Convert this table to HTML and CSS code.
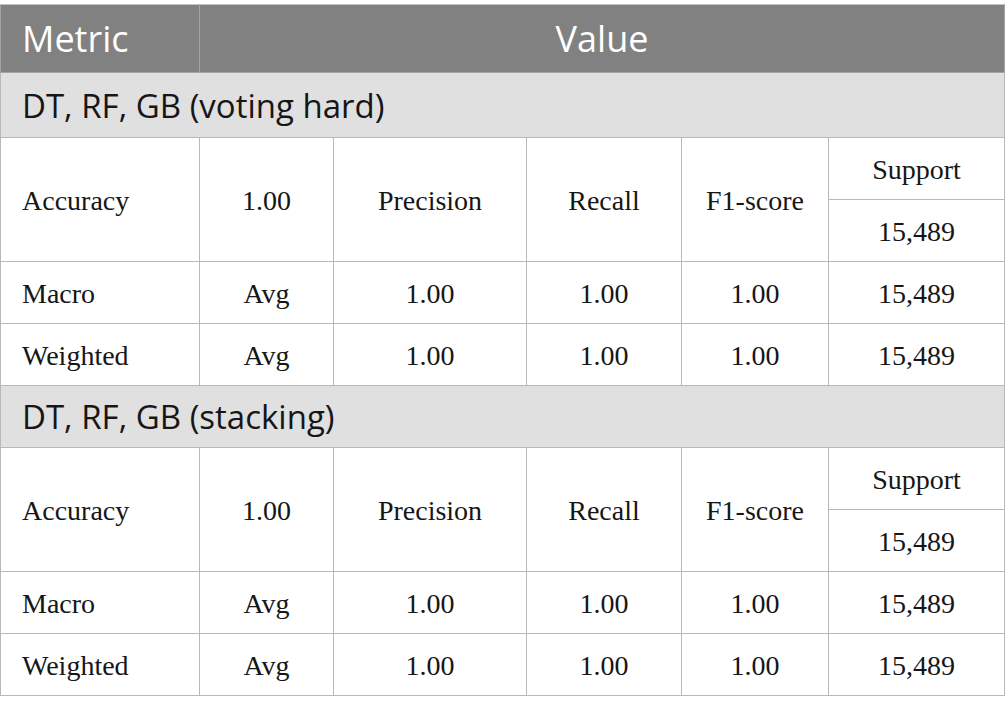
FILE: index.html
```html
<!DOCTYPE html>
<html>
<head>
<meta charset="utf-8">
<link rel="stylesheet" href="styles.css">
</head>
<body>
<table class="metrics">
  <colgroup>
    <col class="c1"><col class="c2"><col class="c3"><col class="c4"><col class="c5"><col class="c6">
  </colgroup>
  <thead>
    <tr class="head">
      <th class="first">Metric</th>
      <th colspan="5">Value</th>
    </tr>
  </thead>
  <tbody>
    <tr class="section"><td colspan="6">DT, RF, GB (voting hard)</td></tr>
    <tr class="row">
      <td class="first" rowspan="2">Accuracy</td>
      <td rowspan="2">1.00</td>
      <td rowspan="2">Precision</td>
      <td rowspan="2">Recall</td>
      <td rowspan="2">F1-score</td>
      <td>Support</td>
    </tr>
    <tr class="row"><td>15,489</td></tr>
    <tr class="row">
      <td class="first">Macro</td><td>Avg</td><td>1.00</td><td>1.00</td><td>1.00</td><td>15,489</td>
    </tr>
    <tr class="row">
      <td class="first">Weighted</td><td>Avg</td><td>1.00</td><td>1.00</td><td>1.00</td><td>15,489</td>
    </tr>
    <tr class="section section-low"><td colspan="6">DT, RF, GB (stacking)</td></tr>
    <tr class="row">
      <td class="first" rowspan="2">Accuracy</td>
      <td rowspan="2">1.00</td>
      <td rowspan="2">Precision</td>
      <td rowspan="2">Recall</td>
      <td rowspan="2">F1-score</td>
      <td>Support</td>
    </tr>
    <tr class="row"><td>15,489</td></tr>
    <tr class="row">
      <td class="first">Macro</td><td>Avg</td><td>1.00</td><td>1.00</td><td>1.00</td><td>15,489</td>
    </tr>
    <tr class="row">
      <td class="first">Weighted</td><td>Avg</td><td>1.00</td><td>1.00</td><td>1.00</td><td>15,489</td>
    </tr>
  </tbody>
</table>
</body>
</html>
```
FILE: styles.css
```css
html, body {
  margin: 0;
  padding: 0;
  background: #ffffff;
}
body {
  padding-top: 4px;
}
.metrics {
  width: 1004px;
  table-layout: fixed;
  border-collapse: collapse;
  font-family: "Liberation Serif", "Times New Roman", serif;
  font-size: 28px;
  color: #161616;
}
.c1 { width: 199px; }
.c2 { width: 134px; }
.c3 { width: 193px; }
.c4 { width: 155px; }
.c5 { width: 147px; }
.c6 { width: 176px; }
.metrics th,
.metrics td {
  border: 1px solid #b8b8b8;
  padding: 0;
  text-align: center;
  vertical-align: middle;
}
.metrics .first {
  text-align: left;
  padding-left: 21px;
}
.head th {
  background: #808180;
  color: #ffffff;
  font-family: "Open Sans", "Noto Sans", sans-serif;
  font-weight: 400;
  font-size: 36px;
  height: 67px;
  border-color: #a3a3a3;
  border-top-color: #c4c4c4;
}
.section td {
  background: #e0e0e0;
  font-family: "Open Sans", "Noto Sans", sans-serif;
  font-size: 33px;
  text-align: left;
  padding-left: 21px;
  height: 64px;
  color: #161616;
}
.section-low td {
  height: 61px;
}
.row td {
  height: 58px;
  padding-top: 3px;
}
```
